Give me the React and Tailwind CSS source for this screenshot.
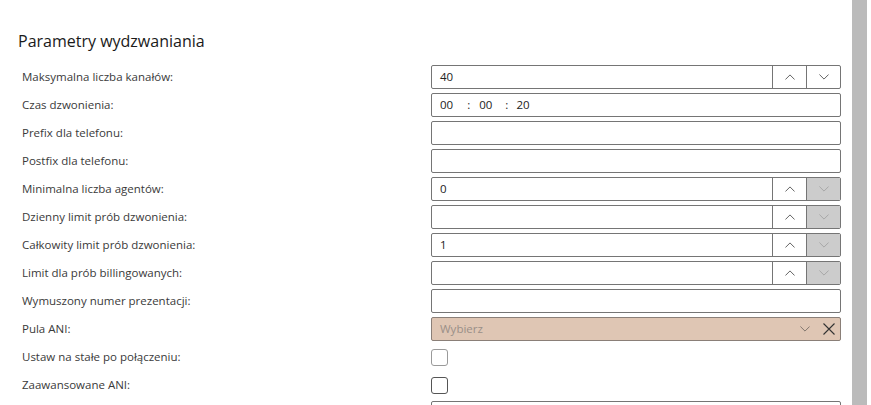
import React from 'react';

const font = { fontFamily: '"Open Sans", "Noto Sans", sans-serif' };

function ChevronUp({ className }) {
    return (
        <svg viewBox="0 0 12 7" className={className} fill="none" stroke="currentColor" strokeWidth="1">
            <path d="M0.5 6.5 L6 1 L11.5 6.5" />
        </svg>
    );
}

function ChevronDown({ className }) {
    return (
        <svg viewBox="0 0 12 7" className={className} fill="none" stroke="currentColor" strokeWidth="1">
            <path d="M0.5 0.5 L6 6 L11.5 0.5" />
        </svg>
    );
}

function Label({ children }) {
    return <div className="h-6 flex items-center text-[11.5px] text-[#3a3a3a]">{children}</div>;
}

function TextBox({ value }) {
    return (
        <div className="h-6 border border-[#757575] rounded-[2px] bg-white flex items-center px-2 text-[11.5px] text-[#222]">
            {value}
        </div>
    );
}

function Spinner({ value, downDisabled }) {
    return (
        <div className="h-6 border border-[#757575] rounded-[2px] bg-white flex overflow-hidden text-[11.5px] text-[#222]">
            <div className="flex-1 flex items-center px-2">{value}</div>
            <div className="w-[34px] border-l border-[#757575] flex items-center justify-center text-[#444]">
                <ChevronUp className="w-[10px] h-[6px]" />
            </div>
            <div className={
                downDisabled
                    ? "w-[34px] border-l border-[#757575] bg-[#cccccc] flex items-center justify-center text-[#a0a0a0]"
                    : "w-[34px] border-l border-[#757575] flex items-center justify-center text-[#444]"
            }>
                <ChevronDown className="w-[10px] h-[6px]" />
            </div>
        </div>
    );
}

function TimeBox() {
    return (
        <div className="h-6 border border-[#757575] rounded-[2px] bg-white flex items-center pl-2 text-[11.5px] text-[#222]">
            <span>00</span>
            <span className="ml-[14px]">:</span>
            <span className="ml-[9px]">00</span>
            <span className="ml-[13px]">:</span>
            <span className="ml-[8px]">20</span>
        </div>
    );
}

function Dropdown() {
    return (
        <div className="h-6 border border-[#8a7f78] rounded-[2px] bg-[#dfc6b4] flex items-center pl-2 text-[11.5px] text-[#9a8f88]">
            <span className="flex-1">Wybierz</span>
            <ChevronDown className="w-[10px] h-[6px] text-[#6f6660] mr-[13px]" />
            <svg viewBox="0 0 12 12" className="w-[12px] h-[12px] mr-[5px] text-[#333]" fill="none" stroke="currentColor" strokeWidth="1.1">
                <path d="M0.5 0.5 L11.5 11.5 M11.5 0.5 L0.5 11.5" />
            </svg>
        </div>
    );
}

function CheckBox({ light }) {
    return (
        <div className="h-6 flex items-center">
            <div className={
                light
                    ? "w-[17px] h-[17px] border border-[#9a9a9a] rounded-[3px] bg-white"
                    : "w-[17px] h-[17px] border border-[#555] rounded-[3px] bg-white"
            } />
        </div>
    );
}

export default function App() {
    const rows = [
        ['Maksymalna liczba kanałów:', <Spinner value="40" />],
        ['Czas dzwonienia:', <TimeBox />],
        ['Prefix dla telefonu:', <TextBox />],
        ['Postfix dla telefonu:', <TextBox />],
        ['Minimalna liczba agentów:', <Spinner value="0" downDisabled />],
        ['Dzienny limit prób dzwonienia:', <Spinner downDisabled />],
        ['Całkowity limit prób dzwonienia:', <Spinner value="1" downDisabled />],
        ['Limit dla prób billingowanych:', <Spinner downDisabled />],
        ['Wymuszony numer prezentacji:', <TextBox />],
        ['Pula ANI:', <Dropdown />],
        ['Ustaw na stałe po połączeniu:', <CheckBox light />],
        ['Zaawansowane ANI:', <CheckBox />],
        ['', <TextBox />],
    ];

    return (
        <div className="w-[871px] h-[405px] overflow-hidden bg-white flex" style={font}>
            <div className="flex-1 pl-[18px] pr-[11px] pt-[29px]">
                <h2 className="h-6 leading-6 text-[16px] text-[#1a1a1a] mb-3">Parametry wydzwaniania</h2>
                <div className="grid grid-cols-[409px_410px] gap-y-1 pl-1">
                    {rows.map(([label, control], i) => (
                        <React.Fragment key={i}>
                            <Label>{label}</Label>
                            {control}
                        </React.Fragment>
                    ))}
                </div>
            </div>
            <div className="w-[15px] bg-[#bbbbbb]" />
            <div className="w-1 bg-white" />
        </div>
    );
}
